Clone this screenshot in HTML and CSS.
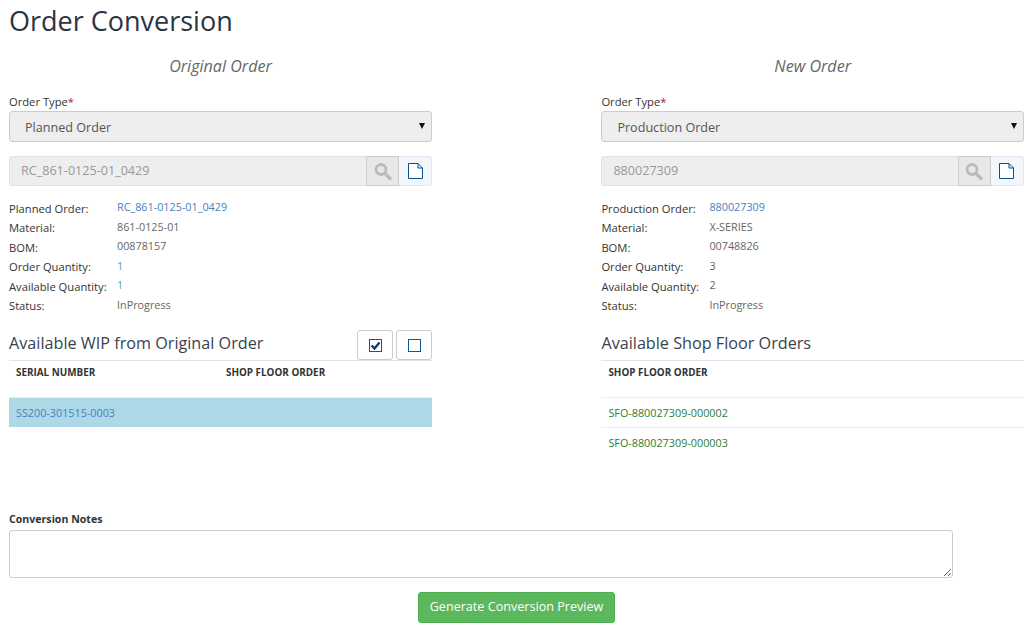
FILE: index.html
```html
<!DOCTYPE html>
<html lang="en">
<head>
<meta charset="utf-8">
<title>Order Conversion</title>
<link rel="stylesheet" href="styles.css">
</head>
<body>
<h1 class="page-title">Order Conversion</h1>
<div class="columns">
  <section class="column">
    <h2 class="column-title">Original Order</h2>
    <label class="field-label">Order Type<span class="req">*</span></label>
    <div class="select-wrap"><div class="select">Planned Order</div></div>
    <div class="lookup">
      <div class="lookup-input">RC_861-0125-01_0429</div>
      <div class="lookup-search"><svg width="18" height="17" viewBox="0 0 18 17"><circle cx="7" cy="6.500" r="5" fill="none" stroke="#bbb" stroke-width="2.800"/><path d="M11 10.500l5 5" stroke="#bbb" stroke-width="3.400" stroke-linecap="round"/></svg></div>
      <div class="lookup-doc"><svg width="15" height="16" viewBox="0 0 15 16"><path d="M.5.500h9.500l4.500 4.500v10.500H.5zM10 .5V5h4.500" fill="#fff" stroke="#0b4f8a"/></svg></div>
    </div>
    <div class="details">
      <div class="d-label">Planned Order:</div><div class="d-value link">RC_861-0125-01_0429</div>
      <div class="d-label">Material:</div><div class="d-value">861-0125-01</div>
      <div class="d-label">BOM:</div><div class="d-value">00878157</div>
      <div class="d-label">Order Quantity:</div><div class="d-value teal">1</div>
      <div class="d-label">Available Quantity:</div><div class="d-value teal">1</div>
      <div class="d-label">Status:</div><div class="d-value">InProgress</div>
    </div>
    <div class="list-head">
      <h3 class="list-title">Available WIP from Original Order</h3>
      <div class="tools">
        <button class="tool"><svg width="13" height="13" viewBox="0 0 13 13"><rect x=".5" y=".5" width="12" height="12" fill="#fff" stroke="#0b5a96"/><path d="M2.500 6.500l3 3 5-6" fill="none" stroke="#0b3f70" stroke-width="2.400"/></svg></button>
        <button class="tool"><svg width="13" height="13" viewBox="0 0 13 13"><rect x=".5" y=".5" width="12" height="12" fill="#fff" stroke="#0b5a96"/></svg></button>
      </div>
    </div>
    <div class="thead two"><span>SERIAL NUMBER</span><span>SHOP FLOOR ORDER</span></div>
    <div class="trow selected">SS200-301515-0003</div>
  </section>
  <section class="column">
    <h2 class="column-title">New Order</h2>
    <label class="field-label">Order Type<span class="req">*</span></label>
    <div class="select-wrap"><div class="select">Production Order</div></div>
    <div class="lookup">
      <div class="lookup-input">880027309</div>
      <div class="lookup-search"><svg width="18" height="17" viewBox="0 0 18 17"><circle cx="7" cy="6.500" r="5" fill="none" stroke="#bbb" stroke-width="2.800"/><path d="M11 10.500l5 5" stroke="#bbb" stroke-width="3.400" stroke-linecap="round"/></svg></div>
      <div class="lookup-doc"><svg width="15" height="16" viewBox="0 0 15 16"><path d="M.5.500h9.500l4.500 4.500v10.500H.5zM10 .5V5h4.500" fill="#fff" stroke="#0b4f8a"/></svg></div>
    </div>
    <div class="details">
      <div class="d-label">Production Order:</div><div class="d-value link">880027309</div>
      <div class="d-label">Material:</div><div class="d-value">X-SERIES</div>
      <div class="d-label">BOM:</div><div class="d-value">00748826</div>
      <div class="d-label">Order Quantity:</div><div class="d-value">3</div>
      <div class="d-label">Available Quantity:</div><div class="d-value">2</div>
      <div class="d-label">Status:</div><div class="d-value">InProgress</div>
    </div>
    <div class="list-head">
      <h3 class="list-title">Available Shop Floor Orders</h3>
    </div>
    <div class="thead"><span>SHOP FLOOR ORDER</span></div>
    <div class="trow green">SFO-880027309-000002</div>
    <div class="trow green">SFO-880027309-000003</div>
  </section>
</div>
<div class="notes">
  <label class="notes-label">Conversion Notes</label>
  <textarea class="notes-input"></textarea>
</div>
<div class="actions"><button class="primary">Generate Conversion Preview</button></div>
</body>
</html>
```
FILE: styles.css
```css
* { box-sizing: border-box; }
html, body { height: 100%; }
body {
  margin: 0;
  padding: 0 7px 0 9px;
  font-family: "Open Sans", sans-serif;
  font-size: 10.800px;
  color: #333;
  background: #fff;
  overflow: hidden;
}
.page-title {
  margin: 0;
  padding-top: 2px;
  height: 50px;
  font-size: 27px;
  line-height: 38px;
  font-weight: 400;
  color: #2c3441;
}
.columns {
  display: grid;
  grid-template-columns: 423px 422.600px;
  column-gap: 169.400px;
  height: 428px;
}
.column-title {
  margin: 0;
  height: 44px;
  padding-top: 4px;
  text-align: center;
  font-size: 16.100px;
  line-height: 24px;
  font-weight: 400;
  font-style: italic;
  color: #666;
}
.field-label {
  display: block;
  height: 17px;
  font-size: 11.200px;
  line-height: 16px;
  color: #333;
}
.req { color: #a8203a; }
.select-wrap { position: relative; }
.select-wrap::after {
  content: "";
  position: absolute;
  right: 7px;
  top: 12px;
  border-left: 3px solid transparent;
  border-right: 3px solid transparent;
  border-top: 6px solid #111;
}
.select {
  height: 31px;
  padding-left: 15px;
  border: 1px solid #ccc;
  border-radius: 3px;
  background: #eee;
  font-size: 12.600px;
  line-height: 31px;
  color: #555;
}
.lookup {
  display: flex;
  height: 30px;
  margin-top: 14px;
}
.lookup-input {
  flex: 1;
  padding-left: 11px;
  border: 1px solid #d8e3ee;
  border-right: 0;
  border-radius: 3px 0 0 3px;
  background: #eee;
  font-size: 12.600px;
  line-height: 27px;
  color: #999;
}
.lookup-search {
  display: flex;
  align-items: center;
  justify-content: center;
  width: 33px;
  border: 1px solid #ccc;
  background: #e8e8e8;
}
.lookup-doc {
  display: flex;
  align-items: center;
  justify-content: center;
  width: 33px;
  border: 1px solid #e0e8f0;
  border-left: 0;
  border-radius: 0 3px 3px 0;
  background: #f3f6fb;
}
.details {
  display: grid;
  grid-template-columns: 108px 1fr;
  grid-auto-rows: 19.500px;
  margin-top: 12px;
  line-height: 19px;
}
.d-label { font-size: 11.200px; color: #333; padding-top: 0.750px; }
.d-value { margin-top: -1px; color: #666; }
.link { color: #4a7fc1; }
.teal { color: #5b9bb0; }
.list-head {
  display: flex;
  align-items: flex-end;
  justify-content: space-between;
  height: 41px;
  margin-top: 5px;
  border-bottom: 1px solid #dde2e8;
}
.list-title {
  margin: 0 0 1px;
  font-size: 16.200px;
  line-height: 31px;
  font-weight: 400;
  color: #3a4250;
}
.tools { display: flex; gap: 3px; }
.tool {
  display: flex;
  align-items: center;
  justify-content: center;
  width: 36px;
  height: 30px;
  padding: 0;
  border: 1px solid #ccc;
  border-radius: 3px;
  background: #fff;
}
.thead {
  display: flex;
  height: 37px;
  padding: 3px 7px;
  border-bottom: 1px solid #eee;
  font-size: 9.900px;
  line-height: 17px;
  font-weight: 700;
  color: #333;
}
.thead.two span:first-child { width: 210px; }
.trow {
  height: 30px;
  padding-left: 7px;
  border-bottom: 1px solid #eee;
  line-height: 30px;
}
.trow:last-child { border-bottom: 0; }
.selected { height: 29px; background: #add8e6; color: #4a7fc1; }
.green { color: #2e7d32; }
.notes { width: 944px; padding-top: 33px; }
.notes-label {
  display: block;
  height: 19px;
  font-size: 10.600px;
  line-height: 17px;
  font-weight: 700;
  color: #333;
}
.notes-input {
  display: block;
  width: 944px;
  height: 48px;
  border: 1px solid #ccc;
  border-radius: 3px;
  background: #fff;
}
.actions {
  display: flex;
  justify-content: center;
  margin-top: 14px;
  width: 1015px;
}
.primary {
  width: 197px;
  height: 31px;
  padding: 0 0 2px;
  border: 1px solid #4cae4c;
  border-radius: 3px;
  background: #5cb85c;
  color: #fff;
  font-family: "Open Sans", sans-serif;
  font-size: 12.600px;
  font-weight: 400;
}
```
